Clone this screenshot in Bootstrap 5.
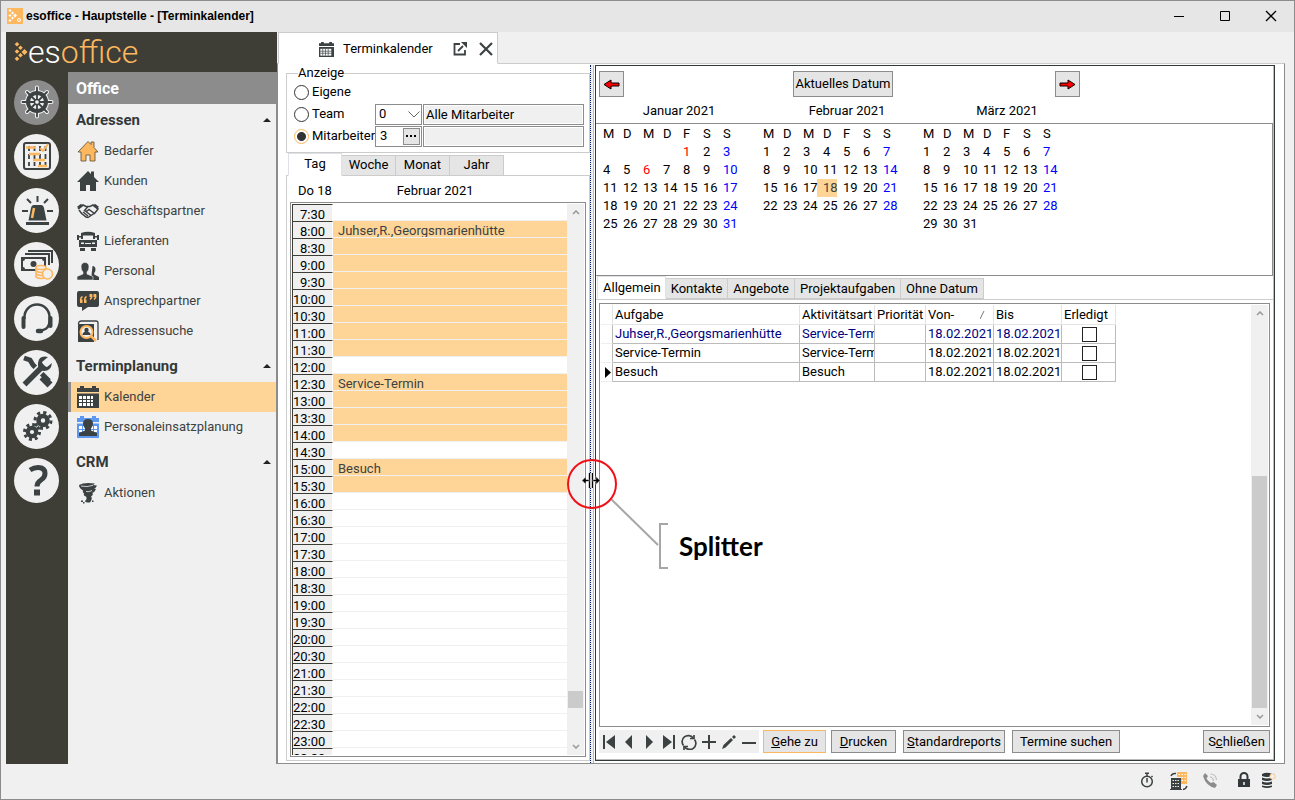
<!DOCTYPE html>
<html lang="de">
<head>
<meta charset="utf-8">
<meta name="viewport" content="width=device-width, initial-scale=1">
<title>esoffice - Hauptstelle - [Terminkalender]</title>
<link href="https://cdn.jsdelivr.net/npm/bootstrap@5.3.0/dist/css/bootstrap.min.css" rel="stylesheet">
<style>
:root{--ink:#3c4242;--olive:#3e3e37;--gold:#fdb75e;--peach:#fed597;--line:#8c8c8c;--soft:#ccc;--face:#f0f0f0;--btn:#e5e5e5}
body{font:13px/16px Roboto,"Liberation Sans",sans-serif;color:#000;background:var(--face)}
svg{display:block;flex:none}
.window{height:100vh;border:1px solid var(--line)}
.titlebar{height:31px;background:#e6e6e6;font:bold 12px/16px "Liberation Sans",sans-serif;padding-left:6px;gap:3px}
.titlebar .controls button{width:46px;height:30px;border:0;background:none;padding:0}
.workspace{min-height:0;padding:0 9px 0 5px}
.brand{height:40px;background:var(--olive);font-size:32px;font-weight:300;line-height:40px;color:#fff;padding-left:8px}
.brand span{color:var(--gold)}
.menu{width:271px;background:var(--face)}
.rail{width:62px;background:var(--olive);padding:8px 1px 0 0;gap:9px}
.rail button{width:45px;height:45px;border:0;border-radius:50%;background:var(--face);padding:0}
.rail button.on{background:var(--line)}
.side{border-right:1px solid var(--line)}
.side-title{height:32px;background:var(--line);color:#fff;font-size:16px;line-height:34px;font-weight:700;padding-left:8px;margin:0}
.side h2{height:32px;margin:0;padding:0 5px 0 8px;font-size:15px;line-height:32px;font-weight:700;color:#33393a}
.side ul+h2{margin-top:4px}
.side a{height:30px;padding-left:9px;gap:5px;color:var(--ink);text-decoration:none}
.side a.current{background:var(--peach);border-left:3px solid var(--line);padding-left:6px}
.tri{border:4px solid transparent;border-top:0;border-bottom-color:#222;width:8px;height:4px}
main{min-width:0}
.doc-tab{height:33px;width:220px;margin-left:1px;margin-bottom:-1px;background:#fff;border:1px solid var(--soft);border-bottom-color:#fff;padding:3px 0 0 40px;position:relative;z-index:1}
.doc-tab button{border:0;background:none;padding:0}
.doc-tab .caption{margin-left:9px}
.panel{min-height:0;background:#fff;border:1px solid var(--line);border-top-color:var(--soft);padding:1px 9px 0 8px}
.left-pane{width:304px;padding-bottom:2px}
fieldset{border:1px solid var(--soft);padding:0 5px 5px 7px}
legend{float:none;width:auto;font-size:13px;line-height:16px;margin:0 0 0 4px;padding:0}
.choice{height:22px;display:grid;grid-template-columns:80px 47px 1fr;column-gap:1px;align-items:center}
.choice label{white-space:nowrap;gap:3px;margin:0}
.choice input[type=radio]{appearance:none;width:15px;height:15px;border:1px solid #333;border-radius:50%;background:#fff;margin:0;flex:none}
.choice input[type=radio]:checked{border-color:var(--gold);background:radial-gradient(#333 0 4px,#fff 5px)}
.field{height:21px;width:100%;min-width:0;border:1px solid var(--line);border-radius:0;background:#fff;padding:0 2px;font:inherit;color:#000}
select.field{appearance:none;background:#fff url("data:image/svg+xml,%3Csvg xmlns='http://www.w3.org/2000/svg' width='12' height='7'%3E%3Cpath d='M.5.5 6 6 11.5.5' fill='none' stroke='%23666'/%3E%3C/svg%3E") no-repeat right 1px center;padding-left:3px}
.field[readonly]{background:var(--face);box-shadow:inset 0 0 0 1px #fff}
.dots{width:17px;border:1px solid var(--line);background:var(--btn);padding:0;margin:1px}
.sheets{--bs-nav-link-padding-x:0;--bs-nav-link-padding-y:0;flex-wrap:nowrap;border:0}
.sheets .nav-link{border:1px solid var(--soft);border-left-width:0;border-radius:0;background:var(--btn);color:#000;height:21px;margin:0;padding:0;line-height:18px;font-size:13px}
.sheets .nav-link.active{height:23px;border-left-width:1px;border-bottom-color:#fff;background:#fff;color:#000;position:relative}
.span-tabs{height:23px;padding-left:2px}
.span-tabs .nav-link{width:54px;padding-bottom:2px}
.day-box{min-height:0;margin-top:-1px;border:1px solid var(--soft);padding:0 3px 3px}
.day-head{height:26px;padding:7px 0 0 8px}
.day-head span:last-child{margin-left:65px}
.slots{min-height:0;border:1px solid var(--line);padding:1px}
.slots table{width:100%;table-layout:fixed;border-collapse:separate;border-spacing:0}
.slots th{width:41px;height:17px;font-weight:400;background:var(--face);border:solid var(--olive);border-width:1px 0 0 1px;padding:4px 7px 0 0;text-align:right;border-right:1px solid #fff;line-height:12px}
.slots td{height:17px;padding:4px 0 0 5px;border-bottom:1px solid var(--face);color:var(--ink);overflow:hidden;white-space:nowrap;line-height:12px}
.slots td.busy{background:var(--peach)}
.bar{width:17px;background:var(--face);flex:none;padding:6px 0}
.bar .thumb{background:#cbcbcb;width:15px}
.bar .day-thumb{height:17px;margin-bottom:36px}
.bar .task-thumb{height:232px;margin-bottom:6px}
.splitter{width:4px;background:var(--face);border-right:1px solid #bbb;position:relative}
.splitter::before{content:"";position:absolute;inset:0 auto 0 0;border-left:1px dotted #001a66}
.callout{position:absolute;left:-24px;top:394px;z-index:5;pointer-events:none}
.callout strong{position:absolute;left:113px;top:72px;font:bold 26px/30px Lato,sans-serif}
.right-pane{min-width:0;border:1px solid #333a3a;box-shadow:inset -1px -1px #bbb;margin:0 0 2px 1px;padding:0 1px 1px 0}
.btn.tool{--bs-btn-padding-x:0;--bs-btn-padding-y:0;--bs-btn-font-size:13px;--bs-btn-line-height:16px;--bs-btn-border-radius:0;--bs-btn-bg:var(--btn);--bs-btn-border-color:var(--line);--bs-btn-color:#000}
.date-bar{display:grid;grid-template-columns:194px 262px 25px;padding:5px 0 0 3px}
.date-bar .btn{height:26px;justify-self:start}
.date-bar .arrow{width:25px}
.date-bar .now{width:100px}
.month-names{display:grid;grid-template-columns:158px 178px 142px;padding:5px 0 3px 4px;text-align:center;line-height:18px}
.months{height:153px;border:solid var(--line);border-width:1px 1px 1px 0;padding:1px 0 0 7px;gap:20px}
.months table{width:140px;table-layout:fixed;align-self:flex-start}
.months th,.months td{font-weight:400;height:18px;padding:0;line-height:18px}
.months .sun{color:#00f}
.months .holiday{color:red}
.months .today{background:linear-gradient(90deg,var(--peach) 14px,transparent 14px);box-shadow:-6px 0 var(--peach);color:var(--ink)}
.list-tabs{height:23px;padding:0 0 0 1px;margin-top:1px;border-bottom:1px solid var(--soft)!important}
.list-tabs .nav-link{padding:0 5px}
.list-tabs .nav-link.active{padding:0 4px 0 5px}
.task-box{min-height:0;margin:3px 3px 0 3px;border:1px solid var(--line);padding:1px}
.tasks{width:515px;table-layout:fixed;border-collapse:separate;border-spacing:0;line-height:18px}
.tasks th,.tasks td{height:19px;padding:0 0 0 2px;border:solid #bbb;border-width:0 1px 1px 0;font-weight:400;overflow:hidden;white-space:nowrap}
.tasks th{border-color:#e4e4e4;height:20px}
.tasks .mark-col{border-bottom-color:#eee;padding:0}
.tasks .linked{color:#000080}
.tasks input{appearance:none;display:block;width:15px;height:15px;border:1px solid #222;background:#fff;margin:0 auto}
.actions{padding:3px 3px 6px 3px;height:32px}
.nav-icons{background:var(--face);width:160px;height:23px}
.nav-icons button{border:0;background:none;padding:0 0 0 2px;width:20px}
.actions .btn{height:23px}
.actions .goto{width:63px;margin-left:4px;--bs-btn-border-color:var(--gold)}
.actions .print{width:65px;margin-left:5px}
.actions .reports{width:102px;margin-left:7px}
.actions .search{width:108px;margin-left:7px}
.actions .leave{width:67px}
.statusbar{height:35px;padding-right:18px}
</style>
</head>
<body>
<div class="window d-flex flex-column overflow-hidden">
<header class="titlebar d-flex align-items-center">
<svg width="16" height="16" viewBox="0 0 16 16"><path fill="#fdb75e" d="M0 0h16v16H0z"/><g fill="#fff"><path d="m3 1 1.500 1.500L3 4 1.500 2.500zM5.500 3.500 7 5 5.500 6.500 4 5zM8 5.500 10 7.500 8 9.500 6 7.500zM5.500 8.500 7 10l-1.500 1.500L4 10zM3 11l1.500 1.500L3 14l-1.500-1.500zM3 6l1.500 1.500L3 9 1.500 7.500z"/></g><circle cx="12" cy="12" r="1.500" fill="none" stroke="#fff"/></svg>
<span class="me-auto">esoffice - Hauptstelle - [Terminkalender]</span>
<div class="controls d-flex">
<button aria-label="Minimieren"><svg class="mx-auto" width="12" height="12"><path d="M1 6.500h10" stroke="#000"/></svg></button>
<button aria-label="Maximieren"><svg class="mx-auto" width="12" height="12"><path d="M1.500 1.500h9v9h-9z" fill="none" stroke="#000"/></svg></button>
<button aria-label="Fenster schließen"><svg class="mx-auto" width="12" height="12"><path d="m1 1 10 10M11 1 1 11" stroke="#000" stroke-width="1.300"/></svg></button>
</div>
</header>

<div class="workspace d-flex flex-fill">
<aside class="menu d-flex flex-column flex-shrink-0">
<div class="brand d-flex align-items-center">
<svg width="14" height="22" viewBox="0 0 14 22" fill="#fdb75e"><path d="m3 1 2.300 2.300L3 5.600.7 3.300zM6.500 4.500l2.300 2.300-2.300 2.300-2.300-2.300zM10.500 8l3 3-3 3-3-3zM3 8.200l2.300 2.300L3 12.800.7 10.500zM6.500 12l2.300 2.300-2.300 2.300-2.300-2.300zM3 15.400l2.300 2.300L3 20 .7 17.700z"/></svg>
<div>es<span>office</span></div>
</div>
<div class="d-flex flex-fill">
<nav class="rail d-flex flex-column align-items-center" aria-label="Module">
<button class="on" aria-label="Office"><svg class="mx-auto" width="34" height="34" viewBox="0 0 34 34" fill="none"><g stroke="#f0f0f0"><path stroke-width="4" stroke-linecap="round" d="M17 2.500v29M2.500 17h29M7 7l20 20M27 7 7 27"/><circle cx="17" cy="17" r="10.500" fill="#f0f0f0" stroke-width="3"/></g><g stroke="#3c4242"><circle cx="17" cy="17" r="9" stroke-width="4"/><path stroke-width="1.800" stroke-linecap="round" d="M17 2.500v29M2.500 17h29M7 7l20 20M27 7 7 27"/></g><circle cx="17" cy="17" r="2.600" fill="#f0f0f0" stroke="#3c4242" stroke-width="1.500"/></svg></button>
<button aria-label="Projekte"><svg class="mx-auto" width="30" height="30" viewBox="0 0 30 30" fill="none"><rect x="2" y="2" width="26" height="26" rx="2" stroke="#3c4242" stroke-width="2"/><path d="M7 5v20M12.500 5v20M18 5v20M23.500 5v20" stroke="#3c4242" stroke-width="1.800" stroke-dasharray="5 3"/><path d="M4 6.500h10M7 13h11M11 19h12M16 25h9" stroke="#fdb75e" stroke-width="2.400"/><path d="m18 7 3 3 5-7" stroke="#fdb75e" stroke-width="2"/></svg></button>
<button aria-label="Alarm"><svg class="mx-auto" width="34" height="34" viewBox="0 0 34 34" fill="#3c4242"><path d="M6 29h23v3H6zM8.500 27.500 11 15q.6-3 3-3h7q2.400 0 3 3l2.500 12.500z"/><path d="m14 15-2 10" stroke="#fdb75e" stroke-width="2.500"/><path d="M17.500 3v6M7 6l4 4M28 6l-4 4M2 18h6M27 18h6" stroke="#3c4242" stroke-width="2"/></svg></button>
<button aria-label="Finanzen"><svg class="mx-auto" width="34" height="34" viewBox="0 0 34 34" fill="none"><path d="M8 4h24v12M5 7h24v11" stroke="#3c4242" stroke-width="2"/><path fill="#3c4242" d="M1 10h25v14H1z"/><path fill="#f0f0f0" d="M5 12h17q0 2 2 2v6q-2 0-2 2H5q0-2-2-2v-6q2 0 2-2z"/><circle cx="13.500" cy="17" r="3" fill="#3c4242"/><g stroke="#fdb75e" stroke-width="1.600" fill="#f0f0f0"><path d="M16 21v9q5 3 10 0v-9"/><path d="M16 24q5 3 10 0M16 27q5 3 10 0"/><ellipse cx="21" cy="20.500" rx="5" ry="2"/><circle cx="27.500" cy="27" r="5"/></g></svg></button>
<button aria-label="Service"><svg class="mx-auto" width="34" height="34" viewBox="0 0 34 34" fill="none" stroke="#3c4242"><path d="M4.500 18v-2a12.500 12.500 0 0 1 25 0v4q0 8-8 9.500" stroke-width="2.500"/><path d="M3.500 17v9M30.500 17v8" stroke-width="4" stroke-linecap="round"/><path d="M18 30h3" stroke-width="4.500" stroke-linecap="round"/></svg></button>
<button aria-label="Werkzeuge"><svg class="mx-auto" width="34" height="34" viewBox="0 0 34 34"><path d="M4 3l6 2 3 5 16 16" stroke="#3c4242" stroke-width="5" fill="none"/><path d="m22 22 8 8" stroke="#3c4242" stroke-width="7"/><path d="M4.500 29.500 23 11" stroke="#f0f0f0" stroke-width="9"/><path d="M4.500 29.500 24 10" stroke="#3c4242" stroke-width="5.500"/><path fill="#3c4242" d="M28 2q-9-2-10 6-1 7 6 8 7 0 8-8l-5 4-4-1-1-4z"/></svg></button>
<button aria-label="Einstellungen"><svg class="mx-auto" width="34" height="34" viewBox="0 0 34 34" fill="none" stroke="#3c4242"><circle cx="23" cy="11.500" r="4.500" stroke-width="4.500"/><circle cx="23" cy="11.500" r="8" stroke-width="3" stroke-dasharray="3.200 3.080"/><circle cx="12" cy="23" r="4.200" stroke-width="4.200"/><circle cx="12" cy="23" r="7.500" stroke-width="3" stroke-dasharray="3 2.890"/></svg></button>
<button aria-label="Hilfe"><svg class="mx-auto" width="34" height="36" viewBox="0 0 34 36"><path d="M10 8q4-2.500 8-2.500 7 0 7 6 0 4-4 6.500t-4 6.500" fill="none" stroke="#3c4242" stroke-width="5"/><path fill="#3c4242" d="M14 27.500h6v6h-6z"/></svg></button>
</nav>
<nav class="side flex-fill" aria-label="Office">
<h1 class="side-title">Office</h1>
<h2 class="d-flex align-items-center justify-content-between">Adressen<span class="tri"></span></h2>
<ul class="list-unstyled m-0">
<li><a href="#" class="d-flex align-items-center"><svg width="22" height="22" viewBox="0 0 22 22"><path d="M1 12 11 1.500l3 3V2h3v5.500l4 4.500h-3v9h-5v-6H9v6H4v-9z" fill="#fdb75e" stroke="#6b5a3c" stroke-width=".9"/></svg>Bedarfer</a></li>
<li><a href="#" class="d-flex align-items-center"><svg width="22" height="22" viewBox="0 0 22 22"><path d="M0 12 11 1l3 3V1.500h3V7l5 5h-3v9h-6v-6H9v6H3v-9z" fill="#3c4242"/></svg>Kunden</a></li>
<li><a href="#" class="d-flex align-items-center"><svg width="22" height="22" viewBox="0 0 22 22" fill="none" stroke="#3c4242" stroke-width="1.500"><path d="m1 9 5-4 3 1.500h4L16 5l5 4-3.500 4.500L12 9.500q-3 3-4.500 1L11 6.500M4 13l5 4 2 .5 6-4M6 12l5 4M9 11.500l5 4M2 10l3 4"/><path d="m1 8 4-3M21 8l-4-3" stroke-width="3"/></svg>Geschäftspartner</a></li>
<li><a href="#" class="d-flex align-items-center"><svg width="22" height="22" viewBox="0 0 22 22" fill="#3c4242"><path d="M4 3q7-2.500 14 0v6H4z"/><path fill="#f0f0f0" d="M6 5.500h10V10H6z"/><path d="M0 5h2v5H0zM20 5h2v5h-2zM2 10h18v7H2z"/><path fill="#f0f0f0" d="M4 12.500h3V14H4zM15 12.500h3V14h-3zM8 13h6v1H8z"/><path d="M0 6h4v1.500H0zM18 6h4v1.500h-4zM3 18h5v3H3zM14 18h5v3h-5z"/></svg>Lieferanten</a></li>
<li><a href="#" class="d-flex align-items-center"><svg width="22" height="22" viewBox="0 0 22 22" fill="#3c4242"><path d="M15.500 6q3 0 3 3.500 0 2-1.300 3.500v1.500L22 17v3h-8z"/><path d="M0 20v-3.500L6 14v-2q-2-2-2-5 0-4.500 4-4.500T12 7q0 3-2 5v2l6 2.500V20z" stroke="#f0f0f0" stroke-width=".6"/></svg>Personal</a></li>
<li><a href="#" class="d-flex align-items-center"><svg width="22" height="22" viewBox="0 0 22 22"><path d="M2 1h18q2 0 2 2v12q0 2-2 2h-9l-6 4v-4H2q-2 0-2-2V3q0-2 2-2z" fill="#3c4242"/><path d="M5.500 6.500q-2 1-2 4M9.500 6.500q-2 1-2 4M14.500 4.500q1 3-1.500 5M18.500 4.500q1 3-1.500 5" fill="none" stroke="#fdb75e" stroke-width="1.500"/><path d="M3 9.500h2.500V13H3zM7 9.500h2.500V13H7zM12.500 4H15v3h-2.500zM16.500 4H19v3h-2.500z" fill="#fdb75e"/></svg>Ansprechpartner</a></li>
<li><a href="#" class="d-flex align-items-center"><svg width="22" height="22" viewBox="0 0 22 22" fill="none"><path d="M1.500 4q0-3 3-3H19q2 0 2 2v17" stroke="#3c4242" stroke-width="1.300"/><path d="M1 4h16v18H1z" fill="#3c4242"/><circle cx="9.500" cy="12" r="6" stroke="#fdb75e" stroke-width="2" fill="#f0f0f0"/><circle cx="9.500" cy="10" r="2.200" fill="#3c4242"/><path d="M5.500 15q0-3.500 4-3.500t4 3.500z" fill="#3c4242"/><path d="m14 16 5 5" stroke="#fdb75e" stroke-width="2.500"/></svg>Adressensuche</a></li>
</ul>
<h2 class="d-flex align-items-center justify-content-between">Terminplanung<span class="tri"></span></h2>
<ul class="list-unstyled m-0">
<li><a href="#" class="current d-flex align-items-center" aria-current="page"><svg width="22" height="22" viewBox="0 0 22 22"><path fill="#3c4242" d="M0 2h22v4H0zM0 7.500h22V22H0zM3 0h4v3H3zM15 0h4v3h-4z"/><path fill="#fff" d="M2 10h14v10H2z"/><path d="M5.500 10v10M9.500 10v10M13.500 10v10M2 13.500h14M2 16.500h14" stroke="#3c4242"/></svg>Kalender</a></li>
<li><a href="#" class="d-flex align-items-center"><svg width="22" height="22" viewBox="0 0 22 22"><path fill="#5c97f0" d="M0 2h22v4H0zM0 7.500h22V22H0zM3 0h4v3H3zM15 0h4v3h-4z"/><path fill="#fff" d="M2 10h18v10H2z"/><path d="M5.500 10v10M16.500 10v10M2 13.500h18M2 16.500h18" stroke="#5c97f0"/><path fill="#3c4242" d="M2 20v-3l6-2.500v-2q-2-2-2-5Q6 3 11 3t5 4.500q0 3-2 5v2l6 2.500v3z"/></svg>Personaleinsatzplanung</a></li>
</ul>
<h2 class="d-flex align-items-center justify-content-between">CRM<span class="tri"></span></h2>
<ul class="list-unstyled m-0">
<li><a href="#" class="d-flex align-items-center"><svg width="22" height="22" viewBox="0 0 22 22"><path fill="#3c4242" d="M2 3q5-3 16-1.500L16 3l4 .5q-1 2.500-3 3l2 .5q-1 3-4 4l1 .5q0 2-2 3 2 1.500-1 6-5 0-5-1.500 2.500-2 1-4.500-3-1-2-3-2-1.500-1-3Q2 6 2 3z"/><path d="M4 4q6 1.500 12-.7M9 9.500q3 .7 6-1" fill="none" stroke="#f0f0f0" stroke-width=".8"/><path fill="#3c4242" d="M4 18.500h2v1.500H4zM6 20h1.500v1.500H6zM15 18.500h1.500V20H15z"/></svg>Aktionen</a></li>
</ul>
</nav>
</div>
</aside>

<main class="d-flex flex-column flex-fill">
<div class="doc-tab d-flex align-items-center">
<svg width="15" height="15" viewBox="0 0 22 22"><path fill="#3c4242" d="M0 2h22v4H0zM0 7.500h22V22H0zM3 0h4v3H3zM15 0h4v3h-4z"/><path fill="#fff" d="M2 10h16v10H2z"/><path d="M5.500 10v10M9.500 10v10M13.500 10v10M2 13.500h16M2 16.500h16" stroke="#3c4242"/></svg>
<span class="caption">Terminkalender</span>
<button class="ms-3 ps-1" aria-label="Abdocken"><svg width="14" height="14" viewBox="0 0 14 14" fill="none" stroke="#3c4242" stroke-width="1.800"><path d="M7 2H1.500v10.500H12V8"/><path d="m5 9 5-5"/><path fill="#3c4242" stroke="none" d="M8 0h6v6z"/></svg></button>
<button class="ms-2" aria-label="Register schließen"><svg class="ms-1" width="14" height="14" viewBox="0 0 14 14"><path d="m1 1 12 12M13 1 1 13" stroke="#3c4242" stroke-width="2.200"/></svg></button>
</div>
<div class="panel d-flex flex-fill">
<section class="left-pane d-flex flex-column flex-shrink-0">
<fieldset>
<legend>Anzeige</legend>
<div class="choice"><label class="d-flex align-items-center"><input type="radio" name="view">Eigene</label></div>
<div class="choice"><label class="d-flex align-items-center"><input type="radio" name="view">Team</label>
<select class="field" aria-label="Team-Nummer"><option>0</option></select><input class="field" aria-label="Team-Name" value="Alle Mitarbeiter" readonly></div>
<div class="choice"><label class="d-flex align-items-center"><input type="radio" name="view" checked>Mitarbeiter</label>
<div class="field d-flex p-0"><input class="border-0 p-0 ps-1 w-50" aria-label="Mitarbeiter-Nummer" value="3"><button class="dots ms-auto" aria-label="Mitarbeiter wählen"><svg class="mx-auto" width="11" height="3"><path d="M0 0h2v2H0zM4 0h2v2H4zM8 0h2v2H8z"/></svg></button></div><input class="field" aria-label="Mitarbeiter-Name" readonly></div>
</fieldset>
<ul class="nav nav-tabs sheets span-tabs align-items-end">
<li class="nav-item"><button class="nav-link active">Tag</button></li><li class="nav-item"><button class="nav-link">Woche</button></li><li class="nav-item"><button class="nav-link">Monat</button></li><li class="nav-item"><button class="nav-link">Jahr</button></li>
</ul>
<div class="day-box d-flex flex-column flex-fill">
<div class="day-head"><span>Do 18</span><span>Februar 2021</span></div>
<div class="slots d-flex flex-fill overflow-hidden">
<div class="flex-fill overflow-hidden"><table id="slots" aria-label="Tagesplan"></table></div>
<div class="bar d-flex flex-column align-items-center">
<svg width="8" height="5"><path d="M1 4 4 1l3 3" fill="none" stroke="#999" stroke-width="1.500"/></svg>
<div class="thumb day-thumb mt-auto"></div>
<svg width="8" height="5"><path d="m1 1 3 3 3-3" fill="none" stroke="#999" stroke-width="1.500"/></svg>
</div>
</div>
</div>
</section>
<div class="splitter flex-shrink-0">
<div class="callout">
<svg width="104" height="112" viewBox="0 0 104 112" fill="none"><path d="m45 40 47 46" stroke="#a6a6a6" stroke-width="2"/><path d="M102 65h-8v44h8" stroke="#a6a6a6" stroke-width="2"/><circle cx="26" cy="25" r="24" stroke="#f01018" stroke-width="2"/><path d="M20 14h9v15h-9z" fill="#fff"/><path d="M23.500 14v15M26.500 14v15" stroke="#000" stroke-width="1.400"/><path fill="#000" stroke="#fff" stroke-width=".5" d="m16 21.500 4-4v3h3v2h-3v3zM34 21.500l-4-4v3h-3v2h3v3z"/></svg>
<strong>Splitter</strong>
</div>
</div>
<section class="right-pane d-flex flex-column flex-fill">
<div class="date-bar">
<button class="btn tool arrow" aria-label="Zurück"><svg class="mx-auto" width="17" height="11"><path d="M1 5.500 8 1v3h8v3H8v3z" fill="red" stroke="#000"/></svg></button>
<button class="btn tool now">Aktuelles Datum</button>
<button class="btn tool arrow" aria-label="Vor"><svg class="mx-auto" width="17" height="11"><path d="M16 5.500 9 1v3H1v3h8v3z" fill="red" stroke="#000"/></svg></button>
</div>
<div class="month-names"><span>Januar 2021</span><span>Februar 2021</span><span>März 2021</span></div>
<div class="months d-flex" id="months"></div>
<ul class="nav nav-tabs sheets list-tabs align-items-end">
<li class="nav-item"><button class="nav-link active">Allgemein</button></li><li class="nav-item"><button class="nav-link">Kontakte</button></li><li class="nav-item"><button class="nav-link">Angebote</button></li><li class="nav-item"><button class="nav-link">Projektaufgaben</button></li><li class="nav-item"><button class="nav-link">Ohne Datum</button></li>
</ul>
<div class="task-box d-flex flex-fill">
<div class="flex-fill">
<table class="tasks">
<colgroup><col style="width:12px"><col style="width:187px"><col style="width:75px"><col style="width:51px"><col style="width:68px"><col style="width:68px"><col style="width:54px"></colgroup>
<thead><tr><th class="mark-col"></th><th>Aufgabe</th><th>Aktivitätsart</th><th>Priorität</th><th><span class="d-flex align-items-center justify-content-between pe-2">Von-<svg width="5" height="8"><path d="M0 8 4 0" stroke="#777"/></svg></span></th><th>Bis</th><th>Erledigt</th></tr></thead>
<tbody>
<tr class="linked"><td class="mark-col"></td><td>Juhser,R.,Georgsmarienhütte</td><td>Service-Termin</td><td></td><td>18.02.2021</td><td>18.02.2021</td><td><input type="checkbox" aria-label="Erledigt"></td></tr>
<tr><td class="mark-col"></td><td>Service-Termin</td><td>Service-Termin</td><td></td><td>18.02.2021</td><td>18.02.2021</td><td><input type="checkbox" aria-label="Erledigt"></td></tr>
<tr><td class="mark-col"><svg class="ms-1" width="6" height="11"><path d="M0 0v11l6-5.500z"/></svg></td><td>Besuch</td><td>Besuch</td><td></td><td>18.02.2021</td><td>18.02.2021</td><td><input type="checkbox" aria-label="Erledigt"></td></tr>
</tbody>
</table>
</div>
<div class="bar d-flex flex-column align-items-center">
<svg width="8" height="5"><path d="M1 4 4 1l3 3" fill="none" stroke="#999" stroke-width="1.500"/></svg>
<div class="thumb task-thumb mt-auto"></div>
<svg width="8" height="5"><path d="m1 1 3 3 3-3" fill="none" stroke="#999" stroke-width="1.500"/></svg>
</div>
</div>
<div class="actions d-flex">
<div class="nav-icons d-flex align-items-center" role="toolbar" aria-label="Datensätze">
<button aria-label="Erster"><svg width="16" height="16" fill="#3c4242"><path d="M2 1h2v14H2zM14 1v14L5 8z"/></svg></button>
<button aria-label="Voriger"><svg width="16" height="16" fill="#3c4242"><path d="M11 1v14L4 8z"/></svg></button>
<button aria-label="Nächster"><svg width="16" height="16" fill="#3c4242"><path d="M5 1v14l7-7z"/></svg></button>
<button aria-label="Letzter"><svg width="16" height="16" fill="#3c4242"><path d="M12 1h2v14h-2zM2 1v14l9-7z"/></svg></button>
<button aria-label="Aktualisieren"><svg width="16" height="16" fill="none" stroke="#3c4242" stroke-width="1.700"><path d="M2.500 11.500A6 6 0 0 1 12 3.800M13.500 5.500A6 6 0 0 1 4 13.200"/><path d="M9 4.500h4V1M7 12.500H3V16"/></svg></button>
<button aria-label="Neu"><svg width="16" height="16"><path d="M8 1v14M1 8h14" stroke="#3c4242" stroke-width="2"/></svg></button>
<button aria-label="Bearbeiten"><svg width="16" height="16" fill="#3c4242"><path d="m1 15 1.500-4L10 4l2 2-7.500 7.500zM11 3l2-2 2 2-2 2z"/></svg></button>
<button aria-label="Löschen"><svg width="16" height="16"><path d="M1 9h14" stroke="#3c4242" stroke-width="2"/></svg></button>
</div>
<button class="btn tool goto"><u>G</u>ehe zu</button>
<button class="btn tool print"><u>D</u>rucken</button>
<button class="btn tool reports"><u>S</u>tandardreports</button>
<button class="btn tool search">Termine suchen</button>
<button class="btn tool leave ms-auto">S<u>c</u>hließen</button>
</div>
</section>
</div>
</main>
</div>

<footer class="statusbar d-flex align-items-start pt-2 justify-content-end flex-shrink-0">
<svg width="16" height="16" viewBox="0 0 16 16" fill="none" stroke="#3c4242" stroke-width="1.500"><circle cx="8" cy="9.500" r="5.300"/><path d="M8 6v4.500M6 1.200h4M8 1v3M12.500 4l1 1"/></svg>
<svg style="margin-left:14px" width="20" height="19" viewBox="0 0 20 19"><path fill="#fdb75e" d="M8 0h10v12h-6V5H8z"/><path stroke="#fff" stroke-dasharray="1.500 1.500" d="M9.500 2.500h7.500M12.500 5.500H17M12.500 8.500H17"/><path fill="#3c4242" d="M2 6h10v11h1v1H1v-1h1z"/><path stroke="#eee" stroke-dasharray="1.500 1" d="M3.500 8.500h7.500M3.500 11.500h7.500M3.500 14.500h7.500"/><path d="M2 4q1-3 5-2.500M18 14q-1 3-4 3.500" stroke="#3c4242" stroke-width="1.400" fill="none"/></svg>
<svg style="margin-left:13px" width="17" height="16" viewBox="0 0 17 16"><path d="m3 1 3 3-1.500 2.500q2 3.500 4.500 4.500l2.500-1 3.500 3-2 3Q4 14 1 4z" fill="#8c8c8c"/><path d="M8 5q3 0 3.500 4M8.500 2Q14 2 14.500 8" fill="none" stroke="#bbb" stroke-width="1.200"/></svg>
<svg style="margin-left:18px" width="14" height="16" viewBox="0 0 14 16"><path fill="#33393a" d="M1 7h12v8H1z"/><path d="M3.500 7V4.500a3.500 3.500 0 0 1 7 0V7" fill="none" stroke="#33393a" stroke-width="2"/><path d="M7 10v3" stroke="#eee" stroke-width="1.600"/></svg>
<svg style="margin-left:10px" width="15" height="16" viewBox="0 0 15 16"><path d="M1 2q5-2.500 10 0v2q-5 2-10 0zM1 5.500q5 2 10 0V8q-5 2-10 0zM1 9.500q5 2 10 0V12q-5 2-10 0zM1 13.500q5 1.500 10 0v1.500q-5 2-10 0z" fill="#33393a"/><circle cx="11.500" cy="4.500" r="2.700" fill="#f0f0f0" stroke="#fdb75e" stroke-dasharray="3 1.200"/></svg>
</footer>
</div>
<script src="https://cdn.jsdelivr.net/npm/bootstrap@5.3.0/dist/js/bootstrap.bundle.min.js"></script>
<script>
// Day plan: half-hour slots; appointments are [first slot, last slot, title] in minutes
const appointments = [[480, 690, 'Juhser,R.,Georgsmarienhütte'], [750, 840, 'Service-Termin'], [900, 930, 'Besuch']];
let rows = '';
for (let m = 450; m <= 1410; m += 30) {
  const a = appointments.find(x => m >= x[0] && m <= x[1]);
  rows += `<tr><th scope="row">${Math.floor(m / 60)}:${m % 60 ? '30' : '00'}</th><td${a ? ' class="busy"' : ''}>${a && a[0] === m ? a[2] : ''}</td></tr>`;
}
document.getElementById('slots').innerHTML = rows;

// Month sheets, weeks start on Monday
const sheets = [{days: 31, start: 4, holidays: [1, 6]}, {days: 28, start: 0, today: 18}, {days: 31, start: 0}];
document.getElementById('months').innerHTML = sheets.map(s => {
  let t = '<table><thead><tr>' + [...'MDMDFSS'].map(d => `<th scope="col">${d}</th>`).join('') + '</tr></thead><tbody>';
  for (let d = 1 - s.start; d <= s.days; d += 7) {
    t += '<tr>';
    for (let i = 0; i < 7; i++) {
      const n = d + i, c = s.today === n ? 'today' : (s.holidays || []).includes(n) ? 'holiday' : i === 6 ? 'sun' : '';
      t += `<td class="${c}">${n > 0 && n <= s.days ? n : ''}</td>`;
    }
    t += '</tr>';
  }
  return t + '</tbody></table>';
}).join('');
</script>
</body>
</html>
